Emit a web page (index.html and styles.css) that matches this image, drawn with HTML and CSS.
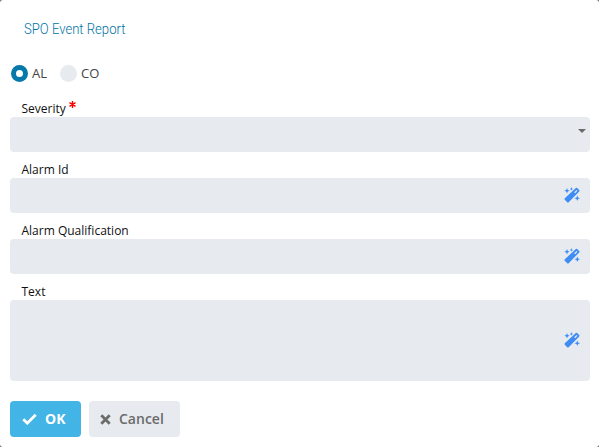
FILE: index.html
```html
<!DOCTYPE html>
<html lang="en">
<head>
<meta charset="utf-8">
<title>SPO Event Report</title>
<link rel="stylesheet" href="styles.css">
</head>
<body>
<svg class="symbols" aria-hidden="true">
  <symbol id="wand" viewBox="0 0 16 16">
    <path fill-rule="evenodd" d="M11.800 1a1 1 0 0 1 1.400 0l2 2a1 1 0 0 1 0 1.400L4.700 15.200a1.100 1.100 0 0 1-1.500 0l-2.400-2.400a1.100 1.100 0 0 1 0-1.500zM12.600 2.900 10.200 5.300l.9.9 2.400-2.400z"/>
    <path d="M3 .9l.8 2 2 .8-2 .8-.8 2-.8-2-2-.8 2-.8zM7.400.1l.5 1.300 1.300.5-1.300.5-.5 1.300-.5-1.300-1.300-.5 1.300-.5zM13.300 8.500l.8 2 2 .8-2 .8-.8 2-.8-2-2-.8 2-.8z"/>
  </symbol>
</svg>
<form class="dialog">
  <h1 class="title"><span class="title-text">SPO Event Report</span></h1>
  <div class="radios">
    <label class="option"><span class="radio checked"></span><span>AL</span></label>
    <label class="option"><span class="radio"></span><span>CO</span></label>
  </div>
  <div class="field">
    <div class="label">Severity<svg class="required" viewBox="0 0 7 7"><path d="M3.500 0v7M.5 1.700l6 3.600M6.500 1.700l-6 3.600"/></svg></div>
    <div class="input select"><span class="arrow"></span></div>
  </div>
  <div class="field">
    <div class="label">Alarm Id</div>
    <div class="input"><svg class="wand"><use href="#wand"/></svg></div>
  </div>
  <div class="field">
    <div class="label">Alarm Qualification</div>
    <div class="input"><svg class="wand"><use href="#wand"/></svg></div>
  </div>
  <div class="field">
    <div class="label">Text</div>
    <div class="input area"><svg class="wand"><use href="#wand"/></svg></div>
  </div>
  <div class="actions">
    <button type="button" class="button ok"><svg class="check" viewBox="0 0 15 12"><path d="M1.300 6.200l4 4L13.700 1.800"/></svg><span>OK</span></button>
    <button type="button" class="button cancel"><svg class="cross" viewBox="0 0 11 11"><path d="M1.300 1.300l8.400 8.400M9.700 1.300L1.300 9.700"/></svg><span>Cancel</span></button>
  </div>
</form>
</body>
</html>
```
FILE: styles.css
```css
* { box-sizing: border-box; }
body { margin: 0; background: #6b6b6b; font-family: "Open Sans", sans-serif; font-size: 13px; color: #222; }
.symbols { display: none; }
.dialog { height: 447px; padding: 18px 9px 0 10px; background: #fff; border-radius: 3px; overflow: hidden; }
.title { margin: 0 0 0 14px; height: 22px; font: 300 15.5px/22px Roboto, sans-serif; color: #0072a5; }
.title-text { display: inline-block; transform: scaleX(.845); transform-origin: left; white-space: nowrap; }
.radios { display: flex; gap: 13px; height: 18px; margin: 24px 0 0 1px; }
.option { display: flex; align-items: center; gap: 4px; line-height: 18px; color: #444; }
.option:first-child { width: 36px; }
.radio { width: 17px; height: 17px; border-radius: 50%; background: #e7eaef; }
.radio.checked { background: #fff; border: 5px solid #0679ab; }
.field { margin-top: 8px; }
.radios + .field { margin-top: 17px; }
.label { display: flex; height: 18px; padding-left: 11.5px; font-size: 12px; line-height: 20px; color: #111; }
.required { width: 7px; height: 7px; margin: 2px 0 0 3.5px; fill: none; stroke: #f00; stroke-width: 1.4; }
.input { display: flex; align-items: center; justify-content: flex-end; height: 35px; padding: 0 9px 0 0; border-radius: 4px; background: #e7eaef; }
.area { height: 81px; }
.select { padding: 0 4px 7px 0; }
.arrow { border: solid transparent; border-width: 4px 4px 0; border-top-color: #6b6b6b; }
.wand { width: 16px; height: 16px; margin: 0 1px 1px 0; fill: #3d8df5; }
.actions { display: flex; gap: 8px; margin-top: 20px; }
.button { display: flex; align-items: center; height: 36px; padding: 0 0 0 12px; border: 0; border-radius: 4px; font: 600 14px/20px "Open Sans", sans-serif; }
.ok { width: 71px; gap: 8px; color: #fff; background: #42b4e6; font-weight: 700; }
.cancel { width: 91px; padding-left: 11px; gap: 8px; color: #6b6b6b; background: #e7eaef; }
.button svg { fill: none; stroke: currentColor; stroke-width: 2.8; }
.check { width: 15px; height: 12px; }
.cross { width: 11px; height: 11px; }
```
